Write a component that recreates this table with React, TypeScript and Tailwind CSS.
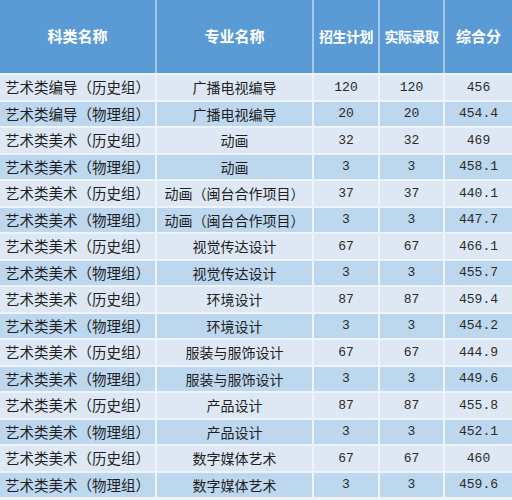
import React from "react";

const rows: [string, string, string, string, string][] = [
  ["艺术类编导（历史组）", "广播电视编导", "120", "120", "456"],
  ["艺术类编导（物理组）", "广播电视编导", "20", "20", "454.4"],
  ["艺术类美术（历史组）", "动画", "32", "32", "469"],
  ["艺术类美术（物理组）", "动画", "3", "3", "458.1"],
  ["艺术类美术（历史组）", "动画（闽台合作项目）", "37", "37", "440.1"],
  ["艺术类美术（物理组）", "动画（闽台合作项目）", "3", "3", "447.7"],
  ["艺术类美术（历史组）", "视觉传达设计", "67", "67", "466.1"],
  ["艺术类美术（物理组）", "视觉传达设计", "3", "3", "455.7"],
  ["艺术类美术（历史组）", "环境设计", "87", "87", "459.4"],
  ["艺术类美术（物理组）", "环境设计", "3", "3", "454.2"],
  ["艺术类美术（历史组）", "服装与服饰设计", "67", "67", "444.9"],
  ["艺术类美术（物理组）", "服装与服饰设计", "3", "3", "449.6"],
  ["艺术类美术（历史组）", "产品设计", "87", "87", "455.8"],
  ["艺术类美术（物理组）", "产品设计", "3", "3", "452.1"],
  ["艺术类美术（历史组）", "数字媒体艺术", "67", "67", "460"],
  ["艺术类美术（物理组）", "数字媒体艺术", "3", "3", "459.6"],
];

const headers = ["科类名称", "专业名称", "招生计划", "实际录取", "综合分"];

export default function App() {
  return (
    <div className="w-[512px] h-[500px] overflow-hidden bg-[#eef4fb] font-['Noto_Sans_CJK_SC',sans-serif]">
      <div className="grid grid-cols-[155px_155px_64px_63px_67px] gap-x-[2px] bg-[#a6c9ea] h-[73px]">
        {headers.map((h, i) => (
          <div
            key={i}
            className={
              i === 2 || i === 3
                ? "bg-[#5b9bd5] flex items-center justify-center text-white font-bold text-[14px] tracking-[-0.5px] whitespace-nowrap"
                : "bg-[#5b9bd5] flex items-center justify-center text-white font-bold text-[15px]"
            }
          >
            {h}
          </div>
        ))}
      </div>
      <div className="grid grid-cols-[155px_155px_64px_63px_67px] gap-[2px] pt-[2px]">
        {rows.map((r, ri) => {
          const bg = ri % 2 === 0 ? "bg-[#dde8f4]" : "bg-[#bdd7ee]";
          return (
            <React.Fragment key={ri}>
              <div className={`${bg} h-[24.5px] flex items-center pl-[5px] text-[14.5px] text-[#1e1e1e] leading-none whitespace-nowrap`}>
                {r[0]}
              </div>
              <div className={`${bg} h-[24.5px] flex items-center justify-center text-[14px] text-[#1e1e1e] leading-none whitespace-nowrap`}>
                {r[1]}
              </div>
              {[r[2], r[3], r[4]].map((v, ci) => (
                <div
                  key={ci}
                  className={`${bg} h-[24.5px] flex items-center justify-center text-[13px] text-[#2a2a2a] leading-none font-['Liberation_Mono',monospace]`}
                >
                  {v}
                </div>
              ))}
            </React.Fragment>
          );
        })}
      </div>
    </div>
  );
}
